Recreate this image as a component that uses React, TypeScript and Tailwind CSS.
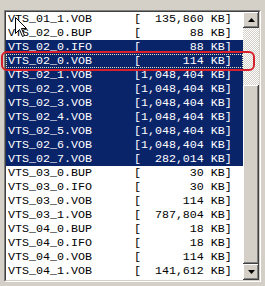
const rows: { name: string; size: string }[] = [
  { name: 'VTS_01_1.VOB', size: '135,860' },
  { name: 'VTS_02_0.BUP', size: '88' },
  { name: 'VTS_02_0.IFO', size: '88' },
  { name: 'VTS_02_0.VOB', size: '114' },
  { name: 'VTS_02_1.VOB', size: '1,048,404' },
  { name: 'VTS_02_2.VOB', size: '1,048,404' },
  { name: 'VTS_02_3.VOB', size: '1,048,404' },
  { name: 'VTS_02_4.VOB', size: '1,048,404' },
  { name: 'VTS_02_5.VOB', size: '1,048,404' },
  { name: 'VTS_02_6.VOB', size: '1,048,404' },
  { name: 'VTS_02_7.VOB', size: '282,014' },
  { name: 'VTS_03_0.BUP', size: '30' },
  { name: 'VTS_03_0.IFO', size: '30' },
  { name: 'VTS_03_0.VOB', size: '114' },
  { name: 'VTS_03_1.VOB', size: '787,804' },
  { name: 'VTS_04_0.BUP', size: '18' },
  { name: 'VTS_04_0.IFO', size: '18' },
  { name: 'VTS_04_0.VOB', size: '114' },
  { name: 'VTS_04_1.VOB', size: '141,612' },
]

const raised =
  'bg-[#d4d0c8] shadow-[inset_-1px_-1px_#404040,inset_1px_1px_#ffffff,inset_-2px_-2px_#808080,inset_2px_2px_#d4d0c8]'

function Arrow({ down }: { down?: boolean }) {
  return (
    <svg width="7" height="4" viewBox="0 0 7 4">
      <polygon points={down ? '0,0 7,0 3.5,4' : '0,4 7,4 3.5,0'} fill="#000" />
    </svg>
  )
}

export default function App() {
  return (
    <div className="relative w-[265px] h-[286px] bg-[#d4d0c8] pt-[10px] pl-[4px] overflow-hidden">
      {/* list box, sunken */}
      <div className="w-[257px] h-[272px] border border-t-[#808080] border-l-[#808080] border-b-white border-r-white">
        <div className="h-full border border-t-[#404040] border-l-[#404040] border-b-[#d4d0c8] border-r-[#d4d0c8] bg-white flex">
          <div className="flex-1 flex flex-col font-['Liberation_Mono','Courier_New',monospace] text-[11.67px] leading-[14px]">
            {rows.map((r, i) => {
              const sel = i >= 2 && i <= 10
              const focus = i === 3
              return (
                <div
                  key={r.name}
                  className={
                    'h-[14px] pl-[2px] whitespace-pre ' +
                    (sel ? 'bg-[#0a246a] text-white ' : 'text-black ') +
                    (focus ? 'outline outline-1 outline-dotted outline-[#e8e0c0] -outline-offset-1' : '')
                  }
                >
                  {r.name.padEnd(18, ' ') + '[' + r.size.padStart(9, ' ') + ' KB]'}
                </div>
              )
            })}
          </div>

          {/* scrollbar */}
          <div className="w-[16px] flex flex-col">
            <div className={'h-[16px] flex items-center justify-center ' + raised}>
              <Arrow />
            </div>
            <div className="h-[57px] bg-[repeating-conic-gradient(#ffffff_0_25%,#d4d0c8_0_50%)] bg-[length:2px_2px]" />
            <div className={'flex-1 ' + raised} />
            <div className={'h-[16px] flex items-center justify-center ' + raised}>
              <Arrow down />
            </div>
          </div>
        </div>
      </div>

      {/* red annotation */}
      <div className="absolute left-[1px] top-[51px] w-[254px] h-[20px] border-2 border-[#d8202c] rounded-[6px]" />

      {/* mouse cursor */}
      <svg className="absolute left-[15px] top-[17px]" width="13" height="21" viewBox="0 0 13 21">
        <path
          d="M0.5 0.5 L0.5 16.5 L4.5 12.5 L7.5 19.5 L9.5 18.5 L6.5 11.5 L11.5 11.5 Z"
          fill="#fff"
          stroke="#000"
          strokeWidth="1"
        />
      </svg>
    </div>
  )
}
